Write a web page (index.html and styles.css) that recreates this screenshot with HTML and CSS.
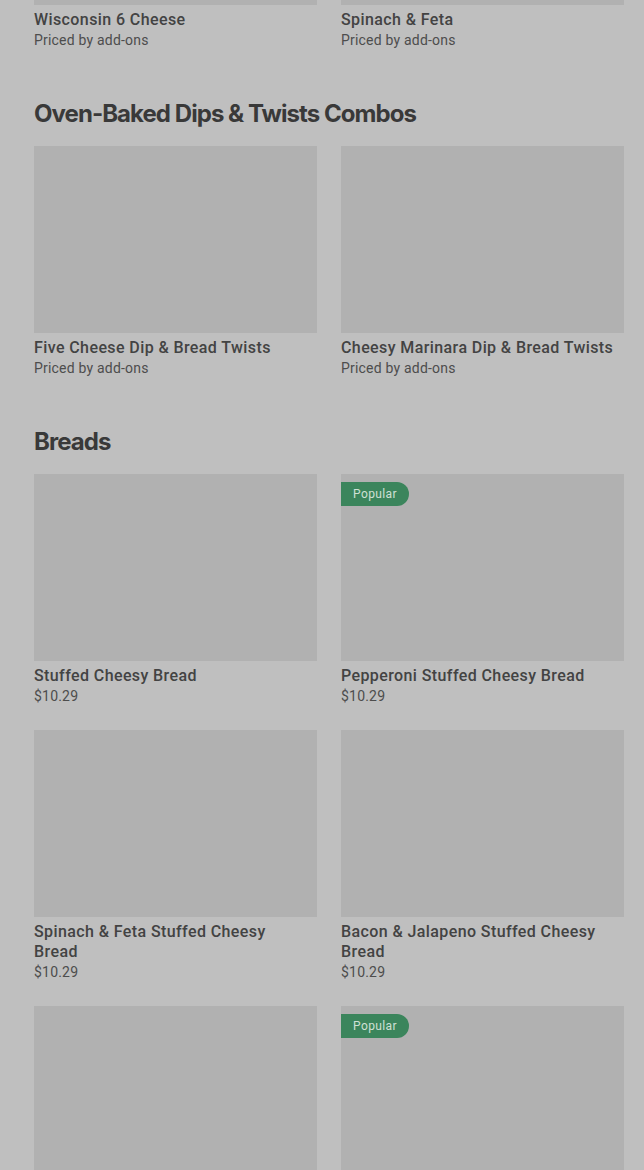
FILE: index.html
```html
<!DOCTYPE html>
<html lang="en">
<head>
    <meta charset="UTF-8">
    <meta name="viewport" content="width=device-width, initial-scale=1.0">
    <title>Menu</title>
    <link rel="stylesheet" href="styles.css">
</head>
<body>

    <div class="menu">

        <!-- tail of the previous category -->
        <section class="category category-cut">
            <div class="grid">
                <div class="item">
                    <div class="thumb"></div>
                    <h3>Wisconsin 6 Cheese</h3>
                    <p>Priced by add-ons</p>
                </div>
                <div class="item">
                    <div class="thumb"></div>
                    <h3>Spinach &amp; Feta</h3>
                    <p>Priced by add-ons</p>
                </div>
            </div>
        </section>

        <section class="category">
            <h2>Oven-Baked Dips &amp; Twists Combos</h2>
            <div class="grid">
                <div class="item">
                    <div class="thumb"></div>
                    <h3>Five Cheese Dip &amp; Bread Twists</h3>
                    <p>Priced by add-ons</p>
                </div>
                <div class="item">
                    <div class="thumb"></div>
                    <h3>Cheesy Marinara Dip &amp; Bread Twists</h3>
                    <p>Priced by add-ons</p>
                </div>
            </div>
        </section>

        <section class="category">
            <h2>Breads</h2>
            <div class="grid">
                <div class="item">
                    <div class="thumb"></div>
                    <h3>Stuffed Cheesy Bread</h3>
                    <p>$10.29</p>
                </div>
                <div class="item">
                    <div class="thumb"><span class="badge">Popular</span></div>
                    <h3>Pepperoni Stuffed Cheesy Bread</h3>
                    <p>$10.29</p>
                </div>
                <div class="item">
                    <div class="thumb"></div>
                    <h3>Spinach &amp; Feta Stuffed Cheesy Bread</h3>
                    <p>$10.29</p>
                </div>
                <div class="item">
                    <div class="thumb"></div>
                    <h3>Bacon &amp; Jalapeno Stuffed Cheesy Bread</h3>
                    <p>$10.29</p>
                </div>
                <div class="item">
                    <div class="thumb"></div>
                </div>
                <div class="item">
                    <div class="thumb"><span class="badge">Popular</span></div>
                </div>
            </div>
        </section>

    </div>

</body>
</html>
```

FILE: styles.css
```css
body {
    margin: 0;
    padding: 0;
    background-color: #bfbfbf;
    font-family: Roboto, "Liberation Sans", sans-serif;
    color: #3b3b3b;
    overflow: hidden;
}

.menu {
    padding: 0 20px 0 34px;
}

.category {
    padding-bottom: 48px;
}

.category-cut {
    margin-top: -182px;
}

.category h2 {
    margin: 0 0 16px;
    font-family: Inter, "Noto Sans", sans-serif;
    font-size: 24px;
    line-height: 32px;
    font-weight: 700;
    letter-spacing: -0.95px;
    color: #393939;
}

.grid {
    display: grid;
    grid-template-columns: 1fr 1fr;
    column-gap: 24px;
    row-gap: 24px;
}

.item h3 {
    margin: 0;
    padding-right: 8px;
    font-size: 16px;
    line-height: 20px;
    font-weight: 500;
    letter-spacing: 0.4px;
    color: #434343;
}

.item p {
    margin: 0;
    font-size: 14px;
    line-height: 20px;
    color: #4d4d4d;
    letter-spacing: 0.2px;
}

.thumb {
    position: relative;
    height: 187px;
    margin-bottom: 5px;
    background-color: #b1b1b1;
}

.badge {
    position: absolute;
    top: 8px;
    left: 0;
    height: 24px;
    padding: 0 12px;
    line-height: 24px;
    font-size: 12px;
    letter-spacing: 0.4px;
    color: #cfe0d5;
    background-color: #3b855c;
    border-radius: 0 12px 12px 0;
}
```
